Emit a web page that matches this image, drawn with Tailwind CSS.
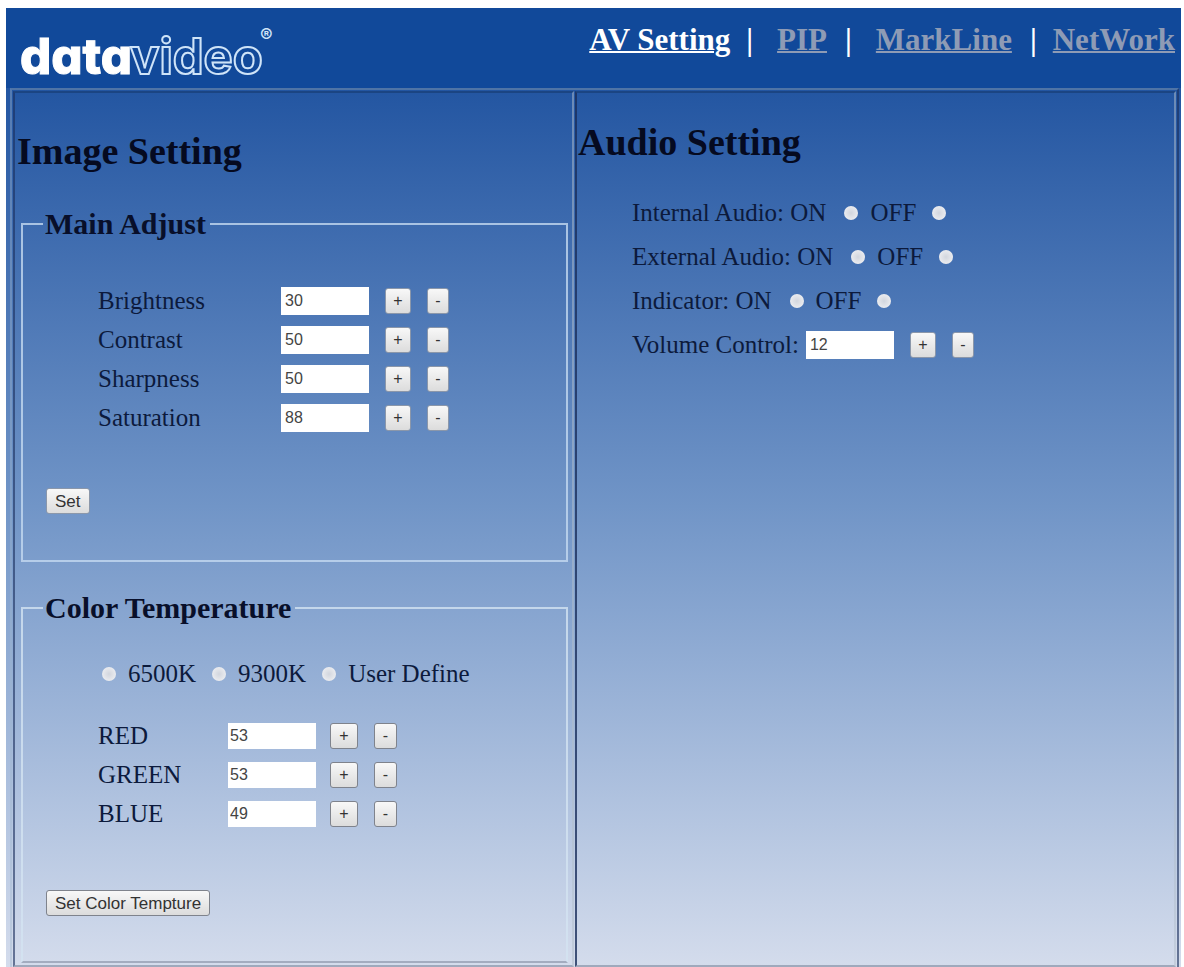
<!DOCTYPE html>
<html lang="en">
<head>
  <meta charset="UTF-8" />
  <meta name="viewport" content="width=device-width, initial-scale=1.0" />
  <title>Datavideo - AV Setting</title>
  <script src="https://cdn.jsdelivr.net/npm/@tailwindcss/browser@4"></script>
</head>
<body class="bg-white font-['Liberation_Serif',serif] text-[25px] text-[#0c1a3c]">
  <div class="flex min-h-screen flex-col pt-2 pr-[3px] pl-[6px]">
    <div class="flex grow flex-col bg-linear-to-b from-[#11499a] from-0% via-[#7195c7] via-52% to-[#d4dcec] to-100%">
      <!-- Header -->
      <header class="flex h-20 shrink-0 items-start justify-between bg-[#11499a] pr-[6px] pl-3">
        <a href="#" aria-label="datavideo">
          <svg class="h-20 w-[264px]" viewBox="0 0 264 80" xmlns="http://www.w3.org/2000/svg">
            <g class="font-['Inter',sans-serif] [font-feature-settings:'cv11']">
              <text x="2" y="66" font-size="49" font-weight="800" fill="#fff" stroke="#fff" stroke-width="1">data</text>
              <text x="112" y="66" font-size="49" font-weight="700" fill="#11499a" stroke="#cfe4f8" stroke-width="2">video</text>
              <text x="242" y="34" font-size="19" font-weight="600" fill="#cfe4f8">®</text>
            </g>
          </svg>
        </a>
        <nav class="flex pt-3 text-[31px] leading-[40px] font-bold text-white">
          <a href="#" class="underline decoration-2">AV Setting</a>
          <span class="mr-6 ml-4">|</span>
          <a href="#" class="text-[#8e9bb5] underline decoration-2">PIP</a>
          <span class="mr-6 ml-[18px]">|</span>
          <a href="#" class="text-[#8e9bb5] underline decoration-2">MarkLine</a>
          <span class="mr-4 ml-[18px]">|</span>
          <a href="#" class="text-[#8e9bb5] underline decoration-2">NetWork</a>
        </nav>
      </header>

      <main class="mr-[2px] ml-1 grid grow grid-cols-[561fr_601fr] gap-px border-2 border-b-0 border-t-[#4f74a6] border-r-[#1b2f5c]/60 border-l-[#9db4cc]/40 px-px pt-px">
        <!-- Image settings -->
        <section class="border-2 border-t-[#1b4583] border-r-[#b4bfcc]/50 border-b-[#8a94a8]/70 border-l-[#1b2f5c]/60">
          <h1 class="mt-9 pl-[2px] text-[38px] leading-[44px] font-bold text-[#050a20]">Image Setting</h1>

          <fieldset class="mt-[33px] mr-1 ml-[6px] border-2 border-[#c4daf0]/80 pb-[46px] pl-5">
            <legend class="pr-1 pl-[2px] text-[30px] leading-[36px] font-bold text-[#080f2a]">Main Adjust</legend>
            <div class="mt-[39px] ml-[55px]">
              <div class="flex h-[39px] items-center">
                <label for="brightness" class="w-[183px]">Brightness</label>
                <input id="brightness" type="text" value="30" class="h-7 w-[88px] bg-white pl-1 font-['Liberation_Sans',sans-serif] text-[16px] text-[#444]" />
                <button type="button" data-for="brightness" data-step="1" class="ml-4 h-[26px] w-[26px] rounded-[3px] border border-[#8b97aa] bg-linear-to-b from-[#f8f8f8] to-[#dcdcdc] font-['Liberation_Sans',sans-serif] text-[16px] leading-none text-[#333]">+</button>
                <button type="button" data-for="brightness" data-step="-1" class="ml-4 h-[26px] w-[22px] rounded-[3px] border border-[#8b97aa] bg-linear-to-b from-[#f8f8f8] to-[#dcdcdc] font-['Liberation_Sans',sans-serif] text-[16px] leading-none text-[#333]">-</button>
              </div>
              <div class="flex h-[39px] items-center">
                <label for="contrast" class="w-[183px]">Contrast</label>
                <input id="contrast" type="text" value="50" class="h-7 w-[88px] bg-white pl-1 font-['Liberation_Sans',sans-serif] text-[16px] text-[#444]" />
                <button type="button" data-for="contrast" data-step="1" class="ml-4 h-[26px] w-[26px] rounded-[3px] border border-[#8b97aa] bg-linear-to-b from-[#f8f8f8] to-[#dcdcdc] font-['Liberation_Sans',sans-serif] text-[16px] leading-none text-[#333]">+</button>
                <button type="button" data-for="contrast" data-step="-1" class="ml-4 h-[26px] w-[22px] rounded-[3px] border border-[#8b97aa] bg-linear-to-b from-[#f8f8f8] to-[#dcdcdc] font-['Liberation_Sans',sans-serif] text-[16px] leading-none text-[#333]">-</button>
              </div>
              <div class="flex h-[39px] items-center">
                <label for="sharpness" class="w-[183px]">Sharpness</label>
                <input id="sharpness" type="text" value="50" class="h-7 w-[88px] bg-white pl-1 font-['Liberation_Sans',sans-serif] text-[16px] text-[#444]" />
                <button type="button" data-for="sharpness" data-step="1" class="ml-4 h-[26px] w-[26px] rounded-[3px] border border-[#8b97aa] bg-linear-to-b from-[#f8f8f8] to-[#dcdcdc] font-['Liberation_Sans',sans-serif] text-[16px] leading-none text-[#333]">+</button>
                <button type="button" data-for="sharpness" data-step="-1" class="ml-4 h-[26px] w-[22px] rounded-[3px] border border-[#8b97aa] bg-linear-to-b from-[#f8f8f8] to-[#dcdcdc] font-['Liberation_Sans',sans-serif] text-[16px] leading-none text-[#333]">-</button>
              </div>
              <div class="flex h-[39px] items-center">
                <label for="saturation" class="w-[183px]">Saturation</label>
                <input id="saturation" type="text" value="88" class="h-7 w-[88px] bg-white pl-1 font-['Liberation_Sans',sans-serif] text-[16px] text-[#444]" />
                <button type="button" data-for="saturation" data-step="1" class="ml-4 h-[26px] w-[26px] rounded-[3px] border border-[#8b97aa] bg-linear-to-b from-[#f8f8f8] to-[#dcdcdc] font-['Liberation_Sans',sans-serif] text-[16px] leading-none text-[#333]">+</button>
                <button type="button" data-for="saturation" data-step="-1" class="ml-4 h-[26px] w-[22px] rounded-[3px] border border-[#8b97aa] bg-linear-to-b from-[#f8f8f8] to-[#dcdcdc] font-['Liberation_Sans',sans-serif] text-[16px] leading-none text-[#333]">-</button>
              </div>
            </div>
            <button type="button" class="mt-[51px] ml-[3px] block h-[26px] rounded-[3px] border border-[#8b97aa] bg-linear-to-b from-[#f8f8f8] to-[#dcdcdc] px-2 font-['Liberation_Sans',sans-serif] text-[17px] leading-none text-[#333]">Set</button>
          </fieldset>

          <fieldset class="mt-7 mr-1 ml-[6px] border-2 border-[#d4e4f2]/80 border-b-[#a3acbf] pb-[45px] pl-5">
            <legend class="pr-1 pl-[2px] text-[30px] leading-[36px] font-bold text-[#080f2a]">Color Temperature</legend>
            <div class="mt-7 ml-[59px] flex h-10 items-center gap-4">
              <label class="flex items-center gap-3"><input type="radio" name="temp" class="h-[14px] w-[14px] appearance-none rounded-full bg-radial from-[#d2d6de] to-[#f4f4f6] checked:from-[#333]" />6500K</label>
              <label class="flex items-center gap-3"><input type="radio" name="temp" class="h-[14px] w-[14px] appearance-none rounded-full bg-radial from-[#d2d6de] to-[#f4f4f6] checked:from-[#333]" />9300K</label>
              <label class="flex items-center gap-3"><input type="radio" name="temp" class="h-[14px] w-[14px] appearance-none rounded-full bg-radial from-[#d2d6de] to-[#f4f4f6] checked:from-[#333]" />User Define</label>
            </div>
            <div class="mt-[22px] ml-[55px]">
              <div class="flex h-[39px] items-center">
                <label for="red" class="w-[130px]">RED</label>
                <input id="red" type="text" value="53" class="h-[26px] w-[88px] bg-white pl-[2px] font-['Liberation_Sans',sans-serif] text-[16px] text-[#444]" />
                <button type="button" data-for="red" data-step="1" class="ml-[14px] h-[26px] w-7 rounded-[3px] border border-[#7f838c] bg-linear-to-b from-[#f8f8f8] to-[#dcdcdc] font-['Liberation_Sans',sans-serif] text-[16px] leading-none text-[#333]">+</button>
                <button type="button" data-for="red" data-step="-1" class="ml-4 h-[26px] w-[23px] rounded-[3px] border border-[#7f838c] bg-linear-to-b from-[#f8f8f8] to-[#dcdcdc] font-['Liberation_Sans',sans-serif] text-[16px] leading-none text-[#333]">-</button>
              </div>
              <div class="flex h-[39px] items-center">
                <label for="green" class="w-[130px]">GREEN</label>
                <input id="green" type="text" value="53" class="h-[26px] w-[88px] bg-white pl-[2px] font-['Liberation_Sans',sans-serif] text-[16px] text-[#444]" />
                <button type="button" data-for="green" data-step="1" class="ml-[14px] h-[26px] w-7 rounded-[3px] border border-[#7f838c] bg-linear-to-b from-[#f8f8f8] to-[#dcdcdc] font-['Liberation_Sans',sans-serif] text-[16px] leading-none text-[#333]">+</button>
                <button type="button" data-for="green" data-step="-1" class="ml-4 h-[26px] w-[23px] rounded-[3px] border border-[#7f838c] bg-linear-to-b from-[#f8f8f8] to-[#dcdcdc] font-['Liberation_Sans',sans-serif] text-[16px] leading-none text-[#333]">-</button>
              </div>
              <div class="flex h-[39px] items-center">
                <label for="blue" class="w-[130px]">BLUE</label>
                <input id="blue" type="text" value="49" class="h-[26px] w-[88px] bg-white pl-[2px] font-['Liberation_Sans',sans-serif] text-[16px] text-[#444]" />
                <button type="button" data-for="blue" data-step="1" class="ml-[14px] h-[26px] w-7 rounded-[3px] border border-[#7f838c] bg-linear-to-b from-[#f8f8f8] to-[#dcdcdc] font-['Liberation_Sans',sans-serif] text-[16px] leading-none text-[#333]">+</button>
                <button type="button" data-for="blue" data-step="-1" class="ml-4 h-[26px] w-[23px] rounded-[3px] border border-[#7f838c] bg-linear-to-b from-[#f8f8f8] to-[#dcdcdc] font-['Liberation_Sans',sans-serif] text-[16px] leading-none text-[#333]">-</button>
              </div>
            </div>
            <button type="button" class="mt-[57px] ml-[3px] block h-[26px] rounded-[3px] border border-[#7f838c] bg-linear-to-b from-[#f8f8f8] to-[#dcdcdc] px-2 font-['Liberation_Sans',sans-serif] text-[17px] leading-none text-[#333]">Set Color Tempture</button>
          </fieldset>
        </section>

        <!-- Audio settings -->
        <section class="border-2 border-t-[#1b4583] border-r-[#b4bfcc]/50 border-b-[#8a94a8]/70 border-l-[#1b2f5c]/80">
          <h1 class="mt-[27px] pl-px text-[38px] leading-[44px] font-bold text-[#050a20]">Audio Setting</h1>
          <div class="mt-[27px] ml-[55px]">
            <div role="group" aria-label="Internal Audio" class="flex h-11 items-center gap-3">
              <label class="flex items-center gap-[18px]">Internal Audio: ON<input type="radio" name="internal" class="h-[14px] w-[14px] appearance-none rounded-full bg-radial from-[#d2d6de] to-[#f4f4f6] checked:from-[#333]" /></label>
              <label class="flex items-center gap-4">OFF<input type="radio" name="internal" class="h-[14px] w-[14px] appearance-none rounded-full bg-radial from-[#d2d6de] to-[#f4f4f6] checked:from-[#333]" /></label>
            </div>
            <div role="group" aria-label="External Audio" class="flex h-11 items-center gap-3">
              <label class="flex items-center gap-[18px]">External Audio: ON<input type="radio" name="external" class="h-[14px] w-[14px] appearance-none rounded-full bg-radial from-[#d2d6de] to-[#f4f4f6] checked:from-[#333]" /></label>
              <label class="flex items-center gap-4">OFF<input type="radio" name="external" class="h-[14px] w-[14px] appearance-none rounded-full bg-radial from-[#d2d6de] to-[#f4f4f6] checked:from-[#333]" /></label>
            </div>
            <div role="group" aria-label="Indicator" class="flex h-11 items-center gap-3">
              <label class="flex items-center gap-[18px]">Indicator: ON<input type="radio" name="indicator" class="h-[14px] w-[14px] appearance-none rounded-full bg-radial from-[#d2d6de] to-[#f4f4f6] checked:from-[#333]" /></label>
              <label class="flex items-center gap-4">OFF<input type="radio" name="indicator" class="h-[14px] w-[14px] appearance-none rounded-full bg-radial from-[#d2d6de] to-[#f4f4f6] checked:from-[#333]" /></label>
            </div>
            <div class="flex h-11 items-center">
              <label for="volume" class="mr-[7px]">Volume Control:</label>
              <input id="volume" type="text" value="12" class="h-7 w-[88px] bg-white pl-1 font-['Liberation_Sans',sans-serif] text-[16px] text-[#444]" />
              <button type="button" data-for="volume" data-step="1" class="ml-4 h-[26px] w-[26px] rounded-[3px] border border-[#8b97aa] bg-linear-to-b from-[#f8f8f8] to-[#dcdcdc] font-['Liberation_Sans',sans-serif] text-[16px] leading-none text-[#333]">+</button>
              <button type="button" data-for="volume" data-step="-1" class="ml-4 h-[26px] w-[22px] rounded-[3px] border border-[#8b97aa] bg-linear-to-b from-[#f8f8f8] to-[#dcdcdc] font-['Liberation_Sans',sans-serif] text-[16px] leading-none text-[#333]">-</button>
            </div>
          </div>
        </section>
      </main>
    </div>
  </div>

  <script>
    // +/- buttons step the value of their field
    document.querySelectorAll("button[data-for]").forEach((button) => {
      button.addEventListener("click", () => {
        const field = document.getElementById(button.dataset.for);
        field.value = Number(field.value) + Number(button.dataset.step);
      });
    });
  </script>
</body>
</html>
